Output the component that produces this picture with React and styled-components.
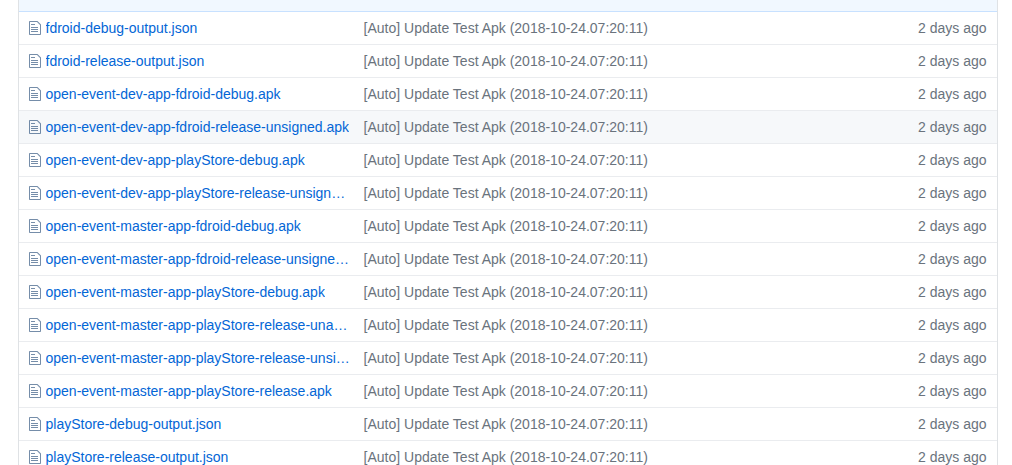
import React from "react";
import styled, { createGlobalStyle } from "styled-components";

const GlobalStyle = createGlobalStyle`
  html, body {
    margin: 0;
    height: 100%;
    background: #fff;
    overflow: hidden;
  }
  body {
    font-family: "Liberation Sans", Arial, sans-serif;
    font-size: 14px;
    color: #24292e;
  }
`;

const Page = styled.div`
  width: 1012px;
  height: 465px;
  overflow: hidden;
  padding: 0 14px 0 18px;
  box-sizing: border-box;
`;

const FileList = styled.div`
  border: 1px solid #dfe2e5;
  border-top: 0;
  border-radius: 0 0 3px 3px;
`;

const CommitBar = styled.div`
  height: 11px;
  background: #f1f8ff;
  border-bottom: 1px solid #c8e1ff;
`;

const Row = styled.div`
  display: grid;
  grid-template-columns: 344.6px 1fr auto;
  align-items: center;
  height: 32px;
  border-top: ${(p) => (p.$first ? "0" : "1px solid #eaecef")};
  background: ${(p) => (p.$hover ? "#f6f8fa" : "#fff")};
  padding-right: 10.4px;
  line-height: 20px;
`;

const NameCell = styled.div`
  display: flex;
  align-items: center;
  padding-left: 10px;
  padding-right: 13.6px;
  min-width: 0;
`;

const Icon = styled.svg`
  flex: none;
  width: 12px;
  height: 16px;
  margin-right: 4.5px;
  fill: rgba(3, 47, 98, 0.55);
`;

const FileLink = styled.a`
  color: #0366d6;
  text-decoration: none;
  white-space: nowrap;
  overflow: hidden;
  text-overflow: ellipsis;
  min-width: 0;
`;

const Message = styled.div`
  color: #6a737d;
  white-space: nowrap;
`;

const Age = styled.div`
  color: #6a737d;
  text-align: right;
  white-space: nowrap;
`;

const FileIcon = () => (
  <Icon viewBox="0 0 12 16" aria-hidden="true">
    <path
      fillRule="evenodd"
      d="M6 5H2V4h4v1zM2 8h7V7H2v1zm0 2h7V9H2v1zm0 2h7v-1H2v1zm10-7.5V14c0 .55-.45 1-1 1H1c-.55 0-1-.45-1-1V2c0-.55.45-1 1-1h7.5L12 4.5zM11 5L8 2H1v12h10V5z"
    />
  </Icon>
);

const files = [
  "fdroid-debug-output.json",
  "fdroid-release-output.json",
  "open-event-dev-app-fdroid-debug.apk",
  "open-event-dev-app-fdroid-release-unsigned.apk",
  "open-event-dev-app-playStore-debug.apk",
  "open-event-dev-app-playStore-release-unsigned.apk",
  "open-event-master-app-fdroid-debug.apk",
  "open-event-master-app-fdroid-release-unsigned.apk",
  "open-event-master-app-playStore-debug.apk",
  "open-event-master-app-playStore-release-unaligned.apk",
  "open-event-master-app-playStore-release-unsigned.apk",
  "open-event-master-app-playStore-release.apk",
  "playStore-debug-output.json",
  "playStore-release-output.json",
];

export default function App() {
  return (
    <Page>
      <GlobalStyle />
      <FileList>
        <CommitBar />
        {files.map((name, i) => (
          <Row key={name} $first={i === 0} $hover={i === 3}>
            <NameCell>
              <FileIcon />
              <FileLink href="#">{name}</FileLink>
            </NameCell>
            <Message>[Auto] Update Test Apk (2018-10-24.07:20:11)</Message>
            <Age>2 days ago</Age>
          </Row>
        ))}
      </FileList>
    </Page>
  );
}
